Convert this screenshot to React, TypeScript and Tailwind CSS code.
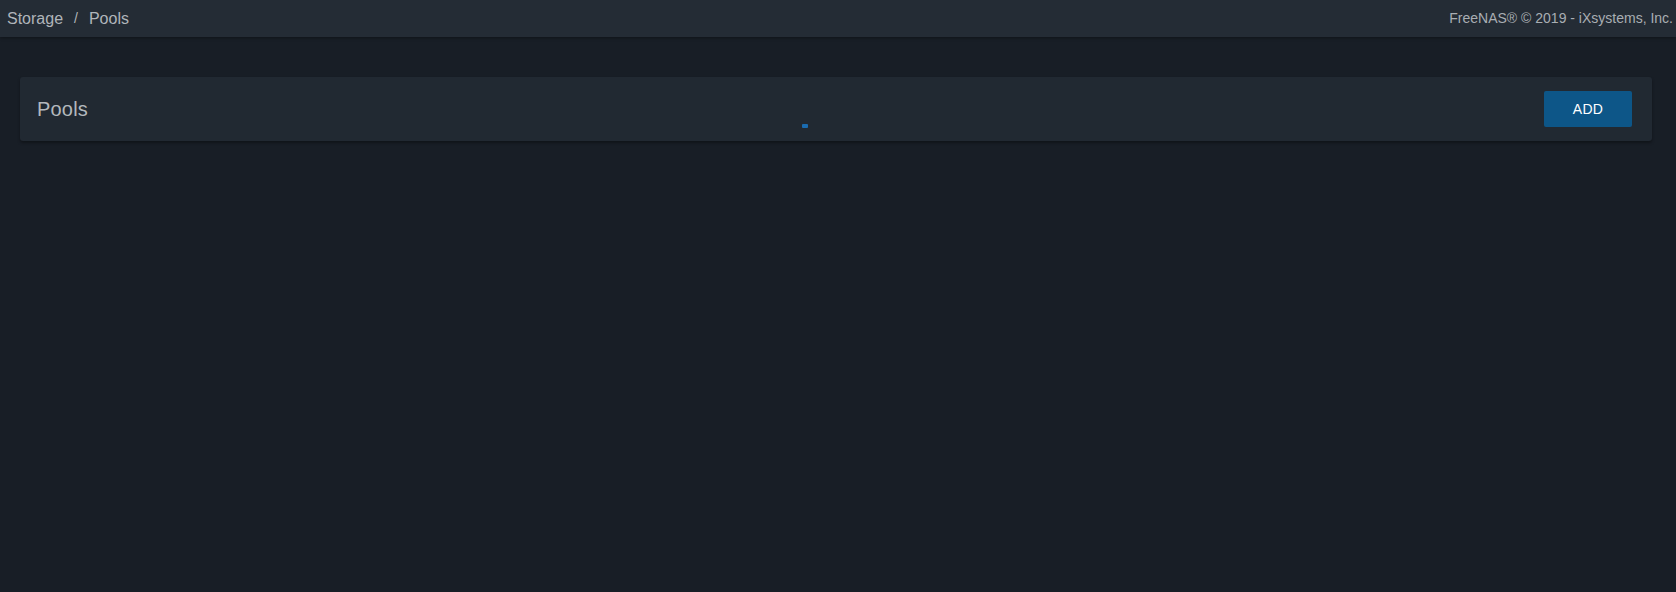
export default function App() {
  return (
    <div className="w-[1676px] h-[592px] bg-[#181e26] font-['Liberation_Sans',Arial,sans-serif] overflow-hidden">
      <header className="h-[37px] bg-[#242c35] flex items-center justify-between pl-[7px] pr-[3px] shadow-[0_1px_3px_rgba(0,0,0,0.35)]">
        <div className="flex items-center text-[16px] text-[#b0b5ba]">
          <span>Storage</span>
          <span className="mx-[11px] text-[14px]">/</span>
          <span>Pools</span>
        </div>
        <div className="text-[14px] text-[#a9aeb3]">FreeNAS® © 2019 - iXsystems, Inc.</div>
      </header>
      <div className="pt-[40px] px-[20px] pr-[24px]">
        <div className="relative h-[64px] bg-[#212932] rounded-[3px] flex items-center justify-between pl-[17px] pr-[20px] shadow-[0_2px_3px_rgba(0,0,0,0.35)]">
          <h1 className="text-[20px] text-[#b3b8bd] tracking-[0.2px]">Pools</h1>
          <button className="w-[88px] h-[36px] bg-[#0d5688] rounded-[2px] text-white text-[14px] tracking-[0.3px]">
            ADD
          </button>
          <div className="absolute left-[782px] top-[47px] w-[6px] h-[4px] bg-[#1a6bb0] rounded-[1px]" />
        </div>
      </div>
    </div>
  );
}
